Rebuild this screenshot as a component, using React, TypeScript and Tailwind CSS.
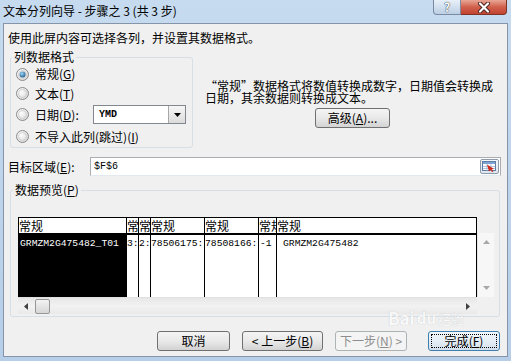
import type { ReactNode } from "react";

const cjk = "font-['Noto_Sans_CJK_SC','Noto_Sans',sans-serif]";
const mono = "font-['Liberation_Mono',monospace]";

const Key = ({ k }: { k: string }) => (
  <span>
    (<span className="underline">{k}</span>)
  </span>
);

const Radio = ({ checked = false, id }: { checked?: boolean; id: string }) => (
  <svg width="13" height="13" viewBox="0 0 13 13" className="shrink-0">
    <defs>
      <radialGradient id={`rg-${id}`} cx="0.35" cy="0.35" r="0.8">
        <stop offset="0" stopColor="#ffffff" />
        <stop offset="1" stopColor="#d4d4d4" />
      </radialGradient>
      <radialGradient id={`dot-${id}`} cx="0.4" cy="0.35" r="0.7">
        <stop offset="0" stopColor="#9fd6f8" />
        <stop offset="1" stopColor="#1b5b8c" />
      </radialGradient>
    </defs>
    <circle cx="6.5" cy="6.5" r="6" fill={`url(#rg-${id})`} stroke="#8b8b8b" />
    <circle cx="6.5" cy="6.5" r="4" fill="none" stroke="#c9c9c9" strokeWidth="0.8" />
    {checked && <circle cx="6.5" cy="6.5" r="3" fill={`url(#dot-${id})`} />}
  </svg>
);

const Btn = ({
  children,
  w,
  className = "",
  disabled = false,
  def = false,
}: {
  children: ReactNode;
  w: string;
  className?: string;
  disabled?: boolean;
  def?: boolean;
}) => {
  const look = disabled
    ? "border-[#adb2b5] bg-[#f4f4f4] text-[#8d8d8d]"
    : def
      ? "border-[#3c7fb1] bg-linear-to-b from-[#f2f7fb] via-[#e6eef5] to-[#d3dfea] text-black"
      : "border-[#707070] bg-linear-to-b from-[#f4f4f4] via-[#e9e9e9] to-[#d3d3d3] text-black";
  return (
    <div
      className={`${w} h-[20px] rounded-[3px] border ${look} flex items-center justify-center leading-[14px] p-[2px] ${className}`}
    >
      {def ? (
        <div className="w-full h-full border border-dotted border-black flex items-center justify-center">
          {children}
        </div>
      ) : (
        children
      )}
    </div>
  );
};

const cols = [
  { w: "w-[108px]", body: "GRMZM2G475482_T01", dark: true, pl: "pl-[1px]" },
  { w: "w-[12px]", body: "3:", pl: "pl-0" },
  { w: "w-[12px]", body: "2:", pl: "pl-0" },
  { w: "w-[54px]", body: "78506175:", pl: "pl-0" },
  { w: "w-[54px]", body: "78508166:", pl: "pl-0" },
  { w: "w-[18px]", body: "-1", pl: "pl-[1px]" },
];

export default function App() {
  return (
    <div
      className={`w-[511px] h-[361px] bg-linear-to-b from-[#c6dbef] to-[#b6cee8] flex flex-col overflow-hidden relative text-[12px] text-black ${cjk}`}
    >
      {/* title bar */}
      <div className="h-[23px] flex justify-between shrink-0">
        <div className="pl-[3px] pt-[3px] leading-[16px] text-[12px]">文本分列向导 - 步骤之 3 (共 3 步)</div>
        <div className="flex items-start pr-[4px]">
          <div className="w-[28px] h-[15px] rounded-bl-[4px] border border-t-0 border-[#7b8aa0] bg-linear-to-b from-[#e8f0f8] to-[#bccfe4] flex items-center justify-center">
            <span className="text-[12px] leading-[12px] font-bold text-white [text-shadow:0_0_1px_#2c3a4c,0_0_1px_#2c3a4c]">?</span>
          </div>
          <div className="w-[46px] h-[15px] rounded-br-[4px] border border-t-0 border-l-0 border-[#7e3327] bg-linear-to-b from-[#e8a595] via-[#d0604c] to-[#c24430] flex items-center justify-center">
            <svg width="14" height="11" viewBox="0 0 14 11">
              <path d="M3 1.5 L11 9.5 M11 1.5 L3 9.5" stroke="#4a2420" strokeWidth="4" strokeLinecap="round" />
              <path d="M3 1.5 L11 9.5 M11 1.5 L3 9.5" stroke="#ffffff" strokeWidth="2.2" strokeLinecap="round" />
            </svg>
          </div>
        </div>
      </div>

      {/* client area */}
      <div className="mx-[3px] h-[334px] shrink-0 bg-[#f0f0f0] border border-[#8594a8] flex flex-col">
        <div className="mt-[7px] ml-[4px] leading-[14px]">使用此屏内容可选择各列，并设置其数据格式。</div>

        <div className="mt-[5px] flex">
          <fieldset className="ml-[6px] w-[183px] h-[98px] border border-[#d5dfe5] rounded-[3px] shrink-0">
            <legend className="ml-[1px] px-[2px] leading-[14px]">列数据格式</legend>
            <div className="flex flex-col pl-[5px]">
              <div className="h-[20px] flex items-center gap-[6px]">
                <Radio checked id="a" />
                <span className="leading-[14px]">常规<Key k="G" /></span>
              </div>
              <div className="h-[19px] flex items-center gap-[6px]">
                <Radio id="b" />
                <span className="leading-[14px]">文本<Key k="T" /></span>
              </div>
              <div className="h-[23px] flex items-center gap-[6px]">
                <Radio id="c" />
                <span className="leading-[14px] w-[52px]">日期<Key k="D" />:</span>
                <div className="w-[93px] h-[19px] border border-[#828790] bg-white flex items-center">
                  <span className={`pl-[5px] flex-1 text-[10px] font-bold leading-[12px] ${mono}`}>YMD</span>
                  <div className="w-[17px] h-[17px] border-l border-[#a9a9a9] bg-linear-to-b from-[#f6f6f6] to-[#dcdcdc] flex items-center justify-center">
                    <svg width="7" height="4" viewBox="0 0 7 4">
                      <path d="M0 0 H7 L3.5 4 Z" fill="#000" />
                    </svg>
                  </div>
                </div>
              </div>
              <div className="h-[21px] flex items-center gap-[6px]">
                <Radio id="d" />
                <span className="leading-[14px]">不导入此列(跳过)<Key k="I" /></span>
              </div>
            </div>
          </fieldset>

          <div className="ml-[12px] mt-[30px] flex flex-col">
            <div className="leading-[12px]">“常规”数据格式将数值转换成数字，日期值会转换成</div>
            <div className="leading-[12px]">日期，其余数据则转换成文本。</div>
            <Btn w="w-[75px]" className="mt-[4px] ml-[110px]">
              <span>高级<Key k="A" />...</span>
            </Btn>
          </div>
        </div>

        {/* target */}
        <div className="mt-[9px] flex items-center h-[19px]">
          <div className="ml-[4px] w-[82px] leading-[14px]">目标区域<Key k="E" />:</div>
          <div className="w-[411px] h-[19px] border border-[#abadb3] border-b-[#e3e9ef] bg-white flex items-center">
            <span className={`pl-[3px] flex-1 text-[10px] leading-[12px] ${mono}`}>$F$6</span>
            <div className="w-[19px] h-[15px] mr-[1px] border border-[#8d9bab] rounded-[2px] bg-linear-to-b from-[#f7f9fb] to-[#dfe6ee] flex items-center justify-center">
              <svg width="15" height="11" viewBox="0 0 15 11">
                <rect x="0.5" y="0.5" width="13" height="9" fill="#fff" stroke="#5d7da6" />
                <rect x="1" y="1" width="12" height="2" fill="#7ea4d4" />
                <path d="M1 5.5 H13 M1 7.5 H13 M5 3 V10 M9 3 V10" stroke="#9fb6d4" strokeWidth="0.8" />
                <path d="M5 3.5 L12 8 L9.5 8.5 L11.5 10.8 L10 11 L8.5 9 L7 10.5 Z" fill="#d02a1a" />
              </svg>
            </div>
          </div>
        </div>

        {/* preview */}
        <fieldset className="mt-[7px] ml-[6px] w-[490px] h-[134px] border border-[#d5dfe5] rounded-[3px] shrink-0">
          <legend className="ml-[2px] px-[2px] leading-[14px]">数据预览<Key k="P" /></legend>
          <div className="mt-[20px] ml-[7px] flex flex-col">
            <div className="flex">
              <div className="w-[459px] border border-b-0 border-black flex bg-white">
                {cols.map((c, i) => (
                  <div key={i} className={`${c.w} shrink-0 border-r border-black flex flex-col overflow-hidden`}>
                    <div className="h-[17px] border-b-2 border-black leading-[15px] whitespace-nowrap overflow-hidden">常规</div>
                    <div
                      className={`h-[62px] pt-[3px] ${c.pl} text-[9.7px] leading-[12px] whitespace-nowrap overflow-hidden ${mono} ${c.dark ? "bg-black text-white" : "bg-white"}`}
                    >
                      {c.body}
                    </div>
                  </div>
                ))}
                <div className="flex-1 flex flex-col overflow-hidden">
                  <div className="h-[17px] border-b-2 border-black leading-[15px] whitespace-nowrap">常规</div>
                  <div className={`h-[62px] pt-[3px] pl-[6px] text-[9.7px] leading-[12px] whitespace-nowrap ${mono}`}>GRMZM2G475482</div>
                </div>
              </div>
              <div className="w-[17px] h-[64px] mt-[16px] bg-[#f7f7f7] border-l border-[#e6e6e6] flex flex-col items-center justify-between py-[7px]">
                <svg width="7" height="4" viewBox="0 0 7 4">
                  <path d="M0 4 L3.5 0 L7 4 Z" fill="#a9a9a9" />
                </svg>
                <svg width="7" height="4" viewBox="0 0 7 4">
                  <path d="M0 0 H7 L3.5 4 Z" fill="#a9a9a9" />
                </svg>
              </div>
            </div>
            <div className="w-[459px] h-[17px] bg-linear-to-b from-[#e7e7e7] via-[#f2f2f2] to-[#e9e9e9] border-t border-[#e0e0e0] flex items-center">
              <svg width="4" height="7" viewBox="0 0 4 7" className="ml-[6px]">
                <path d="M4 0 V7 L0 3.5 Z" fill="#404040" />
              </svg>
              <div className="ml-[7px] w-[15px] h-[15px] rounded-[2px] border border-[#979797] bg-linear-to-b from-[#f3f3f3] to-[#d6d6d6]" />
              <div className="flex-1" />
              <svg width="4" height="7" viewBox="0 0 4 7" className="mr-[7px]">
                <path d="M0 0 V7 L4 3.5 Z" fill="#404040" />
              </svg>
            </div>
          </div>
        </fieldset>

        {/* buttons */}
        <div className="mt-[14px] flex">
          <Btn w="w-[73px]" className="ml-[153px]">取消</Btn>
          <Btn w="w-[81px]" className="ml-[12px]">
            <span>&lt; 上一步<Key k="B" /></span>
          </Btn>
          <Btn w="w-[72px]" className="ml-[12px]" disabled>
            <span>下一步<Key k="N" /> &gt;</span>
          </Btn>
          <Btn w="w-[72px]" className="ml-[21px]" def>
            <span>完成<Key k="F" /></span>
          </Btn>
        </div>
      </div>

      {/* watermark */}
      <div className="absolute left-[388px] top-[308px] flex items-end gap-[2px] opacity-60 pointer-events-none">
        <span className="text-[17px] font-bold leading-[20px] text-white [text-shadow:0_0_1px_#9aa0a8]">Bai</span>
        <span className="text-[15px] font-bold leading-[20px] text-white [text-shadow:0_0_1px_#9aa0a8]">du</span>
        <span className="text-[13px] leading-[18px] text-white [text-shadow:0_0_1px_#9aa0a8]">经验</span>
      </div>
    </div>
  );
}
